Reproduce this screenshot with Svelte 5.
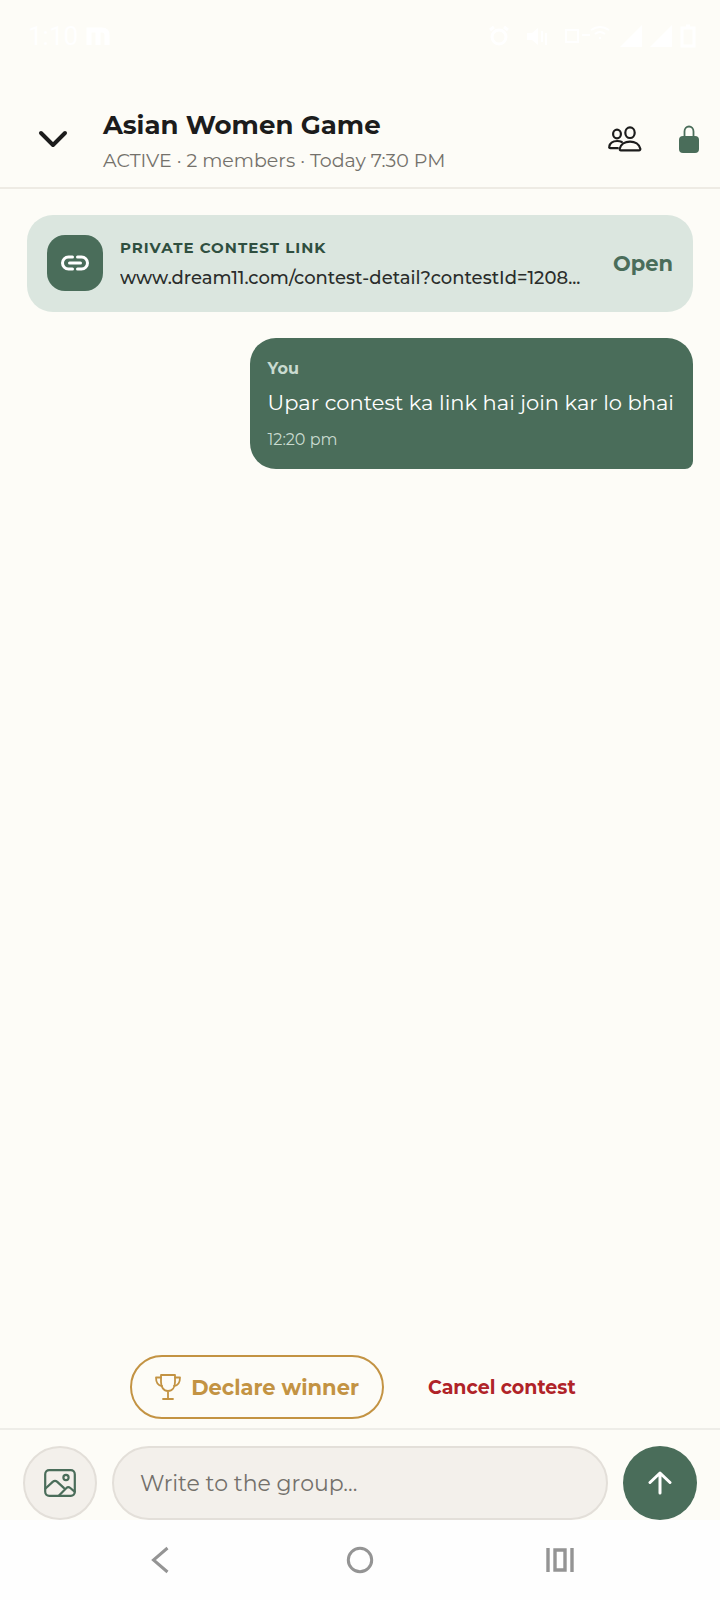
<script lang="ts">
  interface Message {
    author: string;
    text: string;
    time: string;
  }

  const group = {
    name: 'Asian Women Game',
    status: 'ACTIVE',
    members: 2,
    startsAt: 'Today 7:30 PM',
  };

  const contestLink = 'www.dream11.com/contest-detail?contestId=1208...';

  const messages: Message[] = [
    { author: 'You', text: 'Upar contest ka link hai join kar lo bhai', time: '12:20 pm' },
  ];

  let draft = $state('');
</script>

<div class="screen">
  <div class="status">
    <div class="status__side">
      <span>1:10</span>
      <svg width="24" height="18" viewBox="0 0 24 18" fill="none" stroke="currentColor" stroke-width="5">
        <path d="M3 18V3h13q5 0 5 5v10M12 3v15" />
      </svg>
    </div>
    <div class="status__side status__side--icons">
      <svg width="22" height="22" viewBox="0 0 22 22" fill="none" stroke="currentColor" stroke-width="3">
        <circle cx="11" cy="12" r="7" /><path d="M2 5l4-3M20 5l-4-3" />
      </svg>
      <svg class="status__volume" width="22" height="22" viewBox="0 0 22 22" fill="currentColor">
        <path d="M1 8h5l6-5v17l-6-5H1zM15 6h2v11h-2zM19 8h2v12h-2z" />
      </svg>
      <svg width="48" height="22" viewBox="0 0 48 22" fill="none" stroke="currentColor" stroke-width="2">
        <path d="M2 5h12v12H2zM18 10h8M27 5q9-6 18 0M31 9q5-4 10 0M36 12v2" />
      </svg>
      <svg width="22" height="22" viewBox="0 0 22 22" fill="currentColor"><path d="M22 0v22H0z" /></svg>
      <svg width="22" height="22" viewBox="0 0 22 22" fill="currentColor"><path d="M22 0v22H0z" /></svg>
      <svg width="16" height="24" viewBox="0 0 16 24" fill="none" stroke="currentColor" stroke-width="3">
        <path d="M2 4h12v18H2zM6 2h4" />
      </svg>
    </div>
  </div>

  <header class="header">
    <button class="icon-button" type="button" aria-label="Close chat">
      <svg width="30" height="20" viewBox="0 0 30 20" fill="none" stroke="currentColor" stroke-width="4" stroke-linecap="round" stroke-linejoin="round">
        <path d="M3 4l12 12L27 4" />
      </svg>
    </button>
    <div class="header__text">
      <h1>{group.name}</h1>
      <p>{group.status} · {group.members} members · {group.startsAt}</p>
    </div>
    <button class="icon-button" type="button" aria-label="Members">
      <svg width="34" height="26" viewBox="0 0 34 26" fill="none" stroke="currentColor" stroke-width="2.2" stroke-linejoin="round" stroke-linecap="round">
        <ellipse cx="22" cy="6.7" rx="4.7" ry="5.3" />
        <ellipse cx="9" cy="8" rx="3.9" ry="4.4" />
        <path d="M13 24.4c-1.1 0-1.5-.7-1.3-1.6 1-4.6 5.3-7.2 10.3-7.2s9.3 2.6 10.3 7.2c.2.9-.3 1.6-1.3 1.6z" />
        <path d="M13.8 16c-1.3-.7-2.9-1-4.6-1-4 0-7.3 2-8 5.7-.2.8.3 1.4 1.2 1.4h7.4" />
      </svg>
    </button>
    <span class="lock">
      <svg width="20" height="28" viewBox="0 0 20 28" role="img" aria-label="Private group">
        <path d="M5.5 12V6.5a4.5 5 0 0 1 9 0V12" fill="none" stroke="currentColor" stroke-width="1.8" />
        <rect x="0" y="11" width="20" height="17" rx="4" fill="currentColor" />
      </svg>
    </span>
  </header>

  <main class="chat">
    <section class="link-card">
      <span class="link-card__icon">
        <svg width="28" height="16" viewBox="0 0 28 16" fill="none" stroke="currentColor" stroke-width="3" stroke-linecap="round">
          <path d="M11.5 2H7.5a6 6 0 0 0 0 12h4M16.5 2h4a6 6 0 0 1 0 12h-4M8.5 8h11" />
        </svg>
      </span>
      <div class="link-card__body">
        <h2>Private contest link</h2>
        <p>{contestLink}</p>
      </div>
      <a class="link-card__open" href="#open">Open</a>
    </section>

    {#each messages as message}
      <article class="bubble">
        <h3>{message.author}</h3>
        <p>{message.text}</p>
        <time>{message.time}</time>
      </article>
    {/each}
  </main>

  <div class="actions">
    <button class="actions__declare" type="button">
      <svg width="26" height="26" viewBox="0 0 26 26" fill="none" stroke="currentColor" stroke-width="1.8" stroke-linecap="round" stroke-linejoin="round">
        <path d="M6 1h14v7c0 5-2.5 9-7 9S6 13 6 8zM13 17v8M8 25h10" />
        <path d="M6 3.5H1c0 5 1.8 8 6 8.500M20 3.500h5c0 5-1.800 8-6 8.500" />
      </svg>
      Declare winner
    </button>
    <button class="actions__cancel" type="button">Cancel contest</button>
  </div>

  <form class="composer" onsubmit={(event) => event.preventDefault()}>
    <button class="round round--image" type="button" aria-label="Attach image">
      <svg width="32" height="28" viewBox="0 0 32 28" fill="none" stroke="currentColor" stroke-width="2.2" stroke-linecap="round" stroke-linejoin="round">
        <rect x="1.2" y="1.2" width="29.6" height="25.6" rx="4" />
        <circle cx="22" cy="8.5" r="2.6" />
        <path d="M1.5 19.5l7.2-6.6q2.3-2 4.6 0l6.5 6M15 26.5l7.2-7.3q2-1.9 4.1-.2l4.3 3.7" />
      </svg>
    </button>
    <input type="text" aria-label="Message" placeholder="Write to the group..." bind:value={draft} />
    <button class="round round--send" type="submit" aria-label="Send">
      <svg width="24" height="26" viewBox="0 0 24 26" fill="none" stroke="currentColor" stroke-width="3" stroke-linecap="round" stroke-linejoin="round">
        <path d="M12 23V3M2 12.5L12 3l10 9.5" />
      </svg>
    </button>
  </form>

  <nav class="nav">
    <button type="button" aria-label="Back">
      <svg width="18" height="28" viewBox="0 0 18 28" fill="none" stroke="currentColor" stroke-width="3">
        <path d="M16.5 2L2.5 14l14 12" />
      </svg>
    </button>
    <button type="button" aria-label="Home">
      <svg width="28" height="28" viewBox="0 0 28 28" fill="none" stroke="currentColor" stroke-width="3">
        <circle cx="14" cy="14" r="11.7" />
      </svg>
    </button>
    <button type="button" aria-label="Recent apps">
      <svg width="28" height="24" viewBox="0 0 28 24" fill="none" stroke="currentColor" stroke-width="3.4">
        <path d="M2 0v24M26 0v24M9 2h10v20H9z" />
      </svg>
    </button>
  </nav>
</div>

<style>
  :global(body) {
    margin: 0;
    background: #fdfcf7;
  }

  .screen {
    display: flex;
    flex-direction: column;
    min-height: 100vh;
    box-sizing: border-box;
    background: #fdfcf7;
    color: #1c1c1c;
    font-family: Montserrat, Inter, 'Open Sans', sans-serif;
  }

  h1,
  h2,
  h3,
  p {
    margin: 0;
  }

  button {
    display: flex;
    align-items: center;
    justify-content: center;
    padding: 0;
    border: 0;
    background: none;
    color: inherit;
    font: inherit;
    cursor: pointer;
  }

  svg {
    display: block;
    flex: none;
  }

  .status {
    display: flex;
    align-items: center;
    justify-content: space-between;
    height: 72px;
    padding: 0 24px 0 28px;
    color: #ffffff;
    font-family: Roboto, sans-serif;
    font-size: 26px;
  }

  .status__side {
    display: flex;
    align-items: center;
    gap: 8px;
  }

  .status__volume {
    margin: 0 8px;
  }

  .header {
    display: flex;
    align-items: flex-start;
    padding: 34px 21px 9px 26px;
    border-bottom: 2px solid #eeebe4;
  }

  .icon-button {
    width: 54px;
    height: 66px;
  }

  .header__text {
    flex: 1;
    min-width: 0;
    padding-left: 23px;
  }

  .header h1 {
    font-size: 26px;
    line-height: 38px;
    font-weight: 700;
  }

  .header p {
    color: #74716b;
    font-size: 19px;
    line-height: 34px;
  }

  .lock {
    display: flex;
    align-items: center;
    height: 66px;
    margin-left: 27px;
    color: #4a6d5a;
  }

  .chat {
    display: flex;
    flex: 1;
    flex-direction: column;
    gap: 26px;
    padding: 26px 27px;
  }

  .link-card {
    display: flex;
    align-items: center;
    padding: 20px 20px 21px;
    border-radius: 26px;
    background: #dbe6df;
  }

  .link-card__icon {
    display: flex;
    align-items: center;
    justify-content: center;
    flex: none;
    width: 56px;
    height: 56px;
    border-radius: 18px;
    background: #4a6d5a;
    color: #ffffff;
  }

  .link-card__body {
    display: flex;
    flex: 1;
    flex-direction: column;
    gap: 4px;
    min-width: 0;
    padding: 0 17px;
  }

  .link-card h2 {
    color: #2f4f40;
    font-size: 15px;
    line-height: 26px;
    font-weight: 700;
    letter-spacing: 1px;
    text-transform: uppercase;
  }

  .link-card p {
    overflow: hidden;
    color: #2a2d2b;
    font-size: 18px;
    line-height: 26px;
    font-weight: 500;
    text-overflow: ellipsis;
    white-space: nowrap;
  }

  .link-card__open {
    color: #4a6d5a;
    font-size: 21px;
    font-weight: 700;
    text-decoration: none;
  }

  .bubble {
    align-self: flex-end;
    box-sizing: border-box;
    max-width: 82%;
    padding: 17px 19px 12px 18px;
    border-radius: 26px 26px 8px 26px;
    background: #4a6d5a;
    color: #ffffff;
  }

  .bubble h3 {
    color: #c9dbd0;
    font-size: 16px;
    line-height: 28px;
    font-weight: 700;
  }

  .bubble p {
    font-size: 21px;
    line-height: 40px;
  }

  .bubble time {
    display: block;
    color: #c9dbd0;
    font-size: 16px;
    line-height: 34px;
  }

  .actions {
    display: flex;
    align-items: center;
    justify-content: center;
    gap: 30px;
    padding: 0 20px 9px;
  }

  .actions__declare {
    gap: 10px;
    height: 64px;
    padding: 0 23px;
    border: 2px solid #c39343;
    border-radius: 32px;
    color: #c39343;
    font-size: 21px;
    font-weight: 700;
  }

  .actions__cancel {
    height: 64px;
    padding: 0 14px;
    color: #b02328;
    font-size: 19px;
    font-weight: 700;
  }

  .composer {
    display: flex;
    align-items: center;
    gap: 15px;
    padding: 16px 23px 0;
    border-top: 2px solid #eeede8;
  }

  .round {
    flex: none;
    box-sizing: border-box;
    width: 74px;
    height: 74px;
    border-radius: 50%;
  }

  .round--image {
    border: 2px solid #e3dfd9;
    background: #f3f0eb;
    color: #4a6d5a;
  }

  .round--send {
    background: #4a6d5a;
    color: #ffffff;
  }

  .composer input {
    flex: 1;
    box-sizing: border-box;
    min-width: 0;
    height: 74px;
    padding: 0 26px;
    border: 2px solid #e3dfd9;
    border-radius: 37px;
    outline: 0;
    background: #f3f0eb;
    color: inherit;
    font: inherit;
    font-size: 22px;
  }

  .composer input::placeholder {
    color: #74716b;
    opacity: 1;
  }

  .nav {
    display: grid;
    grid-template-columns: repeat(3, 1fr);
    padding: 0 60px;
    background: #fefefe;
    color: #949494;
  }

  .nav button {
    height: 80px;
  }
</style>
